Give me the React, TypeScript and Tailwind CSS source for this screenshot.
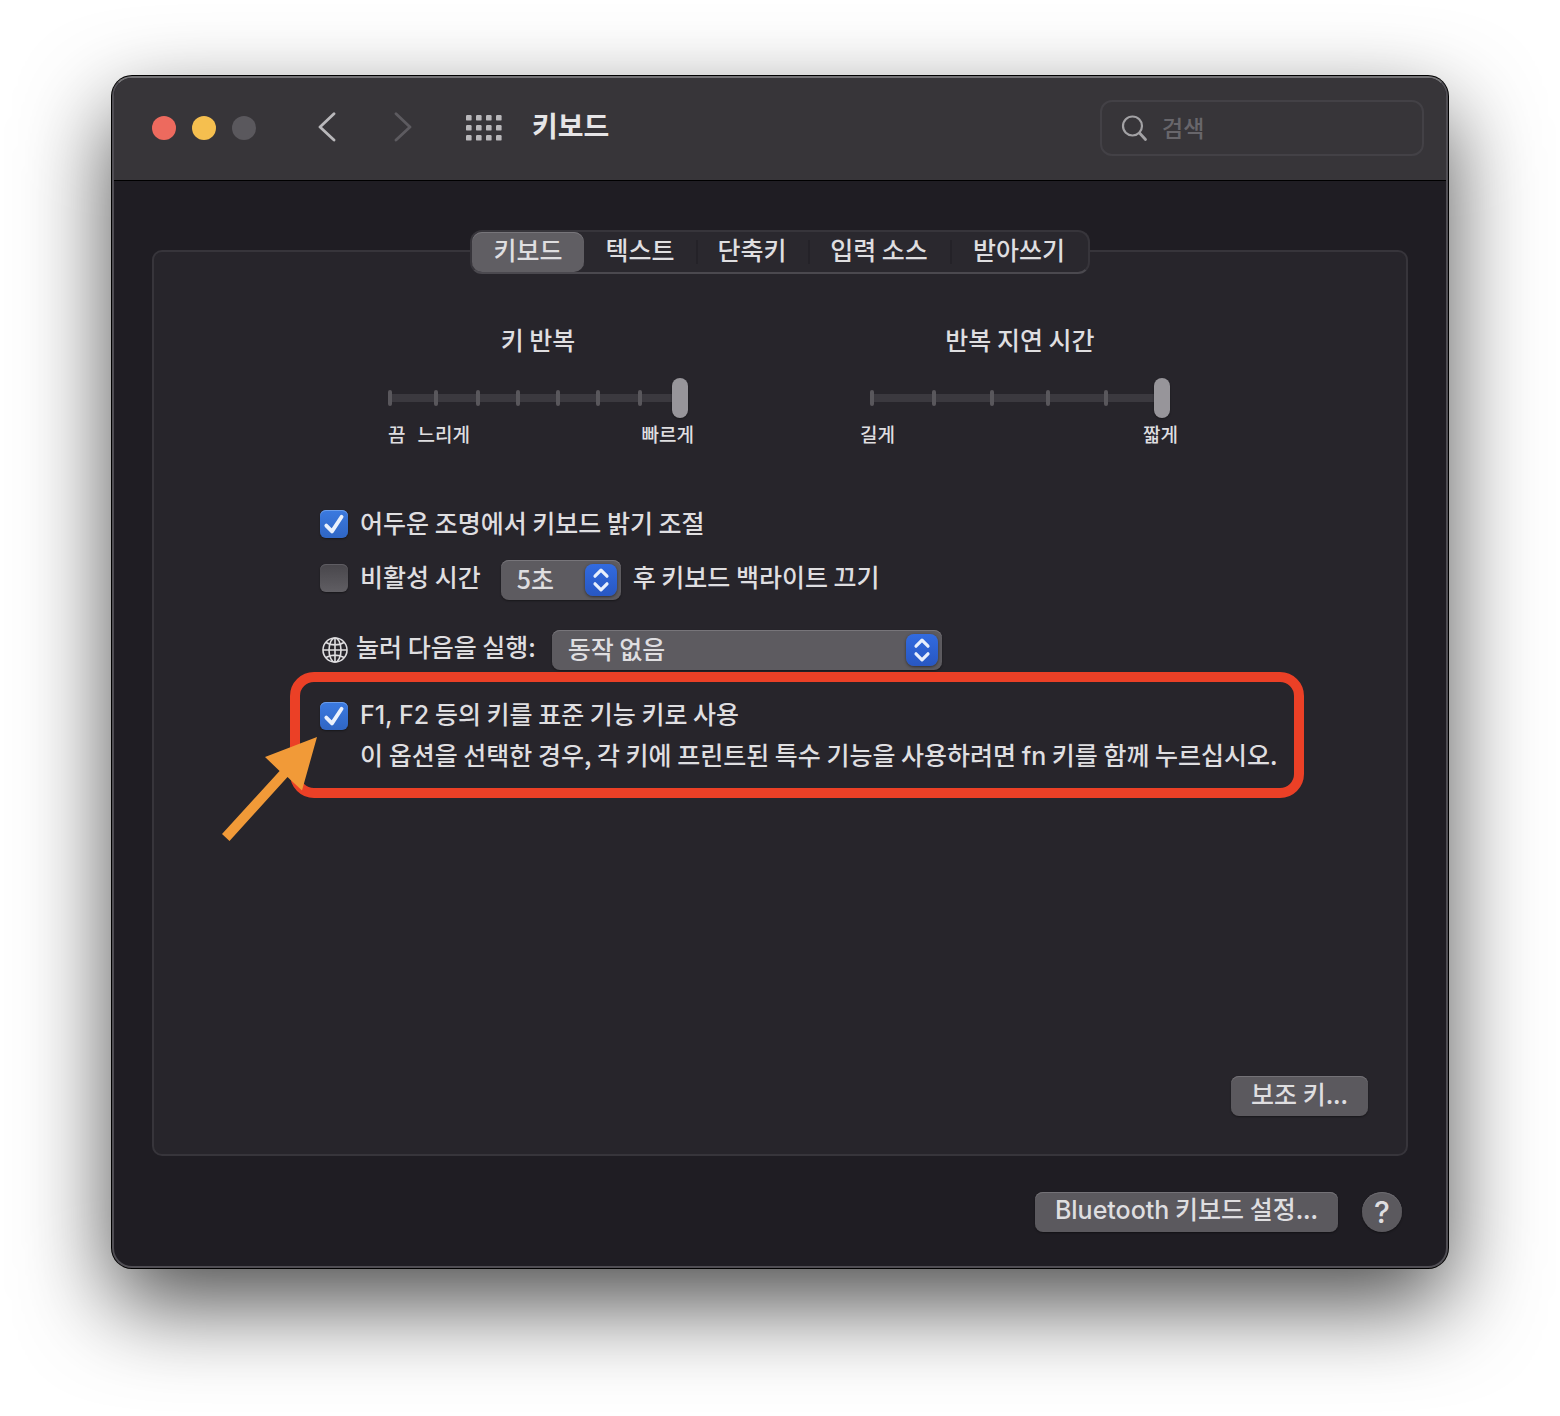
import { useState, type ReactNode } from "react";

const Latin = ({ children }: { children: ReactNode }) => (
  <span className="font-['Inter']">{children}</span>
);

const TABS = [
  { name: "키보드", width: "w-28" },
  { name: "텍스트", width: "w-28" },
  { name: "단축키", width: "w-28" },
  { name: "입력 소스", width: "w-[142px]" },
  { name: "받아쓰기", width: "w-[138px]" },
];

function Checkbox({ id, initial }: { id: string; initial: boolean }) {
  const [on, setOn] = useState(initial);
  return (
    <span className="relative flex size-7 shrink-0">
      <input
        id={id}
        type="checkbox"
        checked={on}
        onChange={(e) => setOn(e.target.checked)}
        className="peer size-7 appearance-none rounded-md bg-linear-to-b from-[#48464b] to-[#605e63] shadow-[inset_0_1px_0_#5f5d63,0_1px_2px_#00000066] checked:from-[#3b7ae0] checked:to-[#2f66c4] checked:shadow-[inset_0_1px_0_#6b9dea,0_1px_2px_#00000066]"
      />
      <svg
        viewBox="0 0 28 28"
        className="pointer-events-none absolute inset-0 hidden size-7 peer-checked:block"
        fill="none"
        stroke="#eaf1fc"
        strokeWidth="3.8"
        strokeLinecap="round"
        strokeLinejoin="round"
      >
        <path d="M6.3 15.6 12 21.4 21.6 6.800" />
      </svg>
    </span>
  );
}

function PopUp({ label, value, className }: { label: string; value: string; className: string }) {
  return (
    <span className={`relative flex h-10 ${className}`}>
      <select
        aria-label={label}
        defaultValue={value}
        className="h-10 w-full appearance-none rounded-lg bg-[#5d5b60] pb-1 pl-4 leading-9 shadow-[inset_0_1px_0_#77757a,0_1px_2px_#00000066]"
      >
        <option>{value}</option>
      </select>
      <svg
        viewBox="0 0 32 32"
        className="pointer-events-none absolute top-1 right-1 size-8 rounded-lg bg-linear-to-b from-[#326be0] to-[#2857c2] shadow-[0_1px_3px_#00000080]"
        fill="none"
        stroke="#e8effc"
        strokeWidth="3.2"
        strokeLinecap="round"
        strokeLinejoin="round"
      >
        <path d="M10 12.2 16 6.2l6 6M10 19.800l6 6 6-6" />
      </svg>
    </span>
  );
}

function Slider({
  id,
  title,
  steps,
  columns,
  children,
}: {
  id: string;
  title: string;
  steps: number;
  columns: string;
  children: ReactNode;
}) {
  return (
    <div className="w-[300px]">
      <label htmlFor={id} className="block text-center leading-8">
        {title}
      </label>
      <div className="relative mt-[23px] flex h-10 items-center">
        <div className="h-2 w-full rounded-full bg-[#3b393f]" />
        <div className={`absolute inset-x-0 top-3 grid pr-2.5 ${columns}`}>
          {Array.from({ length: steps }, (_, i) => (
            <span key={i} className="h-4 w-1 rounded-full bg-[#59575c]" />
          ))}
        </div>
        <input
          id={id}
          type="range"
          min={0}
          max={steps}
          defaultValue={steps}
          className="absolute inset-0 h-10 w-full appearance-none bg-transparent [&::-webkit-slider-thumb]:h-10 [&::-webkit-slider-thumb]:w-4 [&::-webkit-slider-thumb]:appearance-none [&::-webkit-slider-thumb]:rounded-full [&::-webkit-slider-thumb]:bg-[#97959a] [&::-webkit-slider-thumb]:shadow-[0_1px_2px_#00000066]"
        />
      </div>
      {children}
    </div>
  );
}

const buttonLook =
  "h-10 rounded-lg bg-[#5b595e] px-5 pb-1.5 leading-8 shadow-[inset_0_1px_0_#747277,0_1px_2px_#00000066]";

export default function App() {
  const [tab, setTab] = useState(TABS[0].name);
  return (
    <div className="overflow-hidden bg-white px-28 pt-[76px] pb-[148px] font-['Noto_Sans_CJK_KR',sans-serif] text-[25px] font-medium text-[#dfdee0]">
      <div className="rounded-[20px] border-2 border-[#504e54] border-t-[#747376] bg-[#1f1d23] shadow-[0_0_0_1px_#000,0_36px_90px_#000000b3]">
        <header className="flex h-[103px] items-center rounded-t-[18px] border-b border-black bg-[#373539] pr-[22px] pb-0.5 pl-[38px]">
          <div className="flex gap-4">
            <button aria-label="닫기" className="size-6 rounded-full bg-[#ed6a5e]" />
            <button aria-label="최소화" className="size-6 rounded-full bg-[#f5bf4f]" />
            <button aria-label="확대" disabled className="size-6 rounded-full bg-[#5a585d]" />
          </div>
          <button aria-label="뒤로" className="ml-[60px]">
            <svg viewBox="0 0 24 32" className="h-8 w-6" fill="none" stroke="#b9b8bb" strokeWidth="2.800" strokeLinecap="round" strokeLinejoin="round">
              <path d="M18 1.800 4 15l14 13" />
            </svg>
          </button>
          <button aria-label="앞으로" disabled className="ml-[50px]">
            <svg viewBox="0 0 24 32" className="h-8 w-6" fill="none" stroke="#5d5b60" strokeWidth="2.800" strokeLinecap="round" strokeLinejoin="round">
              <path d="M6 1.800l14 13.200-14 13" />
            </svg>
          </button>
          <button aria-label="모두 보기" className="ml-[52px]">
            <svg viewBox="0 0 36 26" className="h-[26px] w-9" fill="#b9b8bb">
              {[0, 10, 20].map((y) =>
                [0, 10, 20, 30].map((x) => <rect key={`${x}-${y}`} x={x} y={y} width="5.600" height="5.600" rx="1.2" />),
              )}
            </svg>
          </button>
          <h1 className="ml-[30px] pb-1.5 text-[28px] leading-10 font-bold text-[#e6e5e7]">키보드</h1>
          <label className="ml-auto flex h-14 w-[324px] items-center rounded-xl border-2 border-[#434146] pl-[18px]">
            <svg viewBox="0 0 28 28" className="size-7 shrink-0" fill="none" stroke="#a3a2a5" strokeLinecap="round">
              <circle cx="12.500" cy="12" r="9.500" strokeWidth="2.2" />
              <path d="M19.500 19l6 6.500" strokeWidth="2.800" />
            </svg>
            <input
              type="search"
              aria-label="검색"
              placeholder="검색"
              className="ml-3.5 w-full min-w-0 bg-transparent pb-0.5 text-[23px] outline-none placeholder:text-[#68666b]"
            />
          </label>
        </header>

        <main className="px-[38px] pt-[49px] pb-[34px]">
          <div
            role="tablist"
            className="relative z-10 mx-auto -mb-6 flex h-11 w-fit rounded-xl border-2 border-[#37353b] border-b-[#4b494f] bg-[#2a282e]"
          >
            {TABS.map(({ name, width }, i) => (
              <button
                key={name}
                role="tab"
                aria-selected={tab === name}
                onClick={() => setTab(name)}
                className={`relative h-10 rounded-[10px] pb-1.5 leading-8 ${width} ${tab === name ? "bg-[#605e63] shadow-[inset_0_1px_0_#77757a]" : ""}`}
              >
                {name}
                {i > 1 && <span className="absolute top-2 left-0 h-6 w-0.5 bg-[#242228]" />}
              </button>
            ))}
          </div>

          <section className="relative flex min-h-[906px] flex-col rounded-[10px] border-2 border-[#37353b] bg-[#27252b] pt-[71px] pb-[38px]">
            <div className="flex justify-center gap-[182px] pr-0.5">
              <Slider id="repeat" title="키 반복" steps={7} columns="grid-cols-[46fr_42fr_40fr_40fr_40fr_42fr_40fr]">
                <div className="flex text-[19px] leading-8">
                  <span>끔</span>
                  <span className="ml-3">느리게</span>
                  <span className="-mr-1.5 ml-auto">빠르게</span>
                </div>
              </Slider>
              <Slider id="delay" title="반복 지연 시간" steps={5} columns="grid-cols-[62fr_58fr_56fr_58fr_56fr]">
                <div className="-mr-2 -ml-2.5 flex justify-between text-[19px] leading-8">
                  <span>길게</span>
                  <span>짧게</span>
                </div>
              </Slider>
            </div>

            <div className="mt-[54px] flex h-10 items-center gap-3 pl-[166px]">
              <Checkbox id="ambient" initial />
              <label htmlFor="ambient" className="pb-0.5">어두운 조명에서 키보드 밝기 조절</label>
            </div>
            <div className="mt-4 flex h-10 items-center pl-[166px]">
              <div className="flex items-center gap-3 pb-1">
                <Checkbox id="idle" initial={false} />
                <label htmlFor="idle" className="pb-0.5">비활성 시간</label>
              </div>
              <PopUp label="비활성 시간" value="5초" className="ml-5 w-[120px]" />
              <span className="ml-3 pb-1.5">후 키보드 백라이트 끄기</span>
            </div>
            <div className="mt-[30px] flex h-10 items-center pl-[168px]">
              <svg viewBox="0 0 26 26" className="size-[26px]" fill="none" stroke="#dfdee0" strokeWidth="1.600">
                <circle cx="13" cy="13" r="12" />
                <ellipse cx="13" cy="13" rx="6" ry="12" />
                <path d="M13 1v24M1 13h24M4 5.500c5 3.200 13 3.200 18 0M4 20.500c5-3.200 13-3.200 18 0" />
              </svg>
              <span className="ml-2 pb-1.5">눌러 다음을 실행:</span>
              <PopUp label="눌러 다음을 실행" value="동작 없음" className="ml-4 w-[390px]" />
            </div>

            <div className="relative mt-0.5 mr-[102px] ml-[136px] rounded-[24px] border-10 border-[#eb4026] pt-3.5 pb-3 pl-5 whitespace-nowrap">
              <div className="flex h-10 items-center gap-3">
                <Checkbox id="fn" initial />
                <label htmlFor="fn" className="pb-0.5">
                  <Latin>F1, F2</Latin> 등의 키를 표준 기능 키로 사용
                </label>
              </div>
              <p className="h-10 pl-10 leading-9">
                이 옵션을 선택한 경우, 각 키에 프린트된 특수 기능을 사용하려면 <Latin>fn</Latin> 키를 함께 누르십시오.
              </p>
              <svg viewBox="0 0 96 104" className="pointer-events-none absolute top-[55px] -left-[78px] h-[104px] w-24" fill="#f19a38">
                <path d="M95 0 80 53.500 65.500 40 7.500 104 0 97 57.600 34 43 20Z" />
              </svg>
            </div>

            <button className={`mt-auto mr-[38px] self-end ${buttonLook}`}>보조 키...</button>
          </section>

          <footer className="mt-9 flex justify-end gap-6 pr-1.5">
            <button className={buttonLook}>
              <Latin>Bluetooth</Latin> 키보드 설정...
            </button>
            <button
              aria-label="도움말"
              className="size-10 rounded-full bg-[#5b595e] font-['Inter'] text-[30px] leading-10 shadow-[inset_0_1px_0_#6c6a6f,0_1px_2px_#00000066]"
            >
              ?
            </button>
          </footer>
        </main>
      </div>
    </div>
  );
}
